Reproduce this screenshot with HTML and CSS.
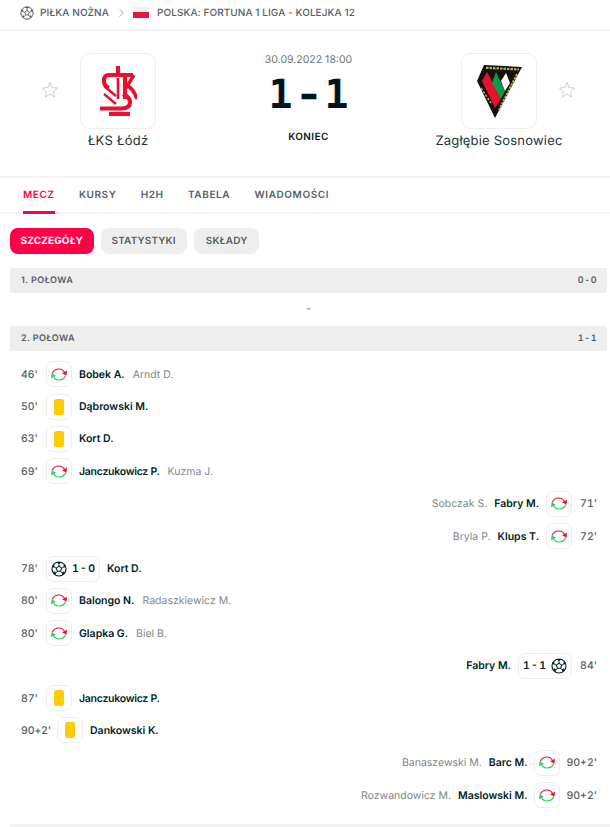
FILE: index.html
```html
<!DOCTYPE html>
<html lang="pl">
<head>
<meta charset="utf-8">
<title>ŁKS Łódź - Zagłębie Sosnowiec</title>
<link rel="stylesheet" href="styles.css">
</head>
<body>
<svg class="defs" width="0" height="0" aria-hidden="true">
  <defs>
    <symbol id="ball" viewBox="0 0 20 20">
      <circle cx="10" cy="10" r="8.800" fill="none" stroke="currentColor" stroke-width="1.400"/>
      <path d="M10 6.500l3.300 2.400-1.300 3.900H8L6.700 8.900z" fill="none" stroke="currentColor" stroke-width="1.300" stroke-linejoin="round"/>
      <path d="M10 6.500V4M13.300 8.900l2.400-.8M12 12.800l1.500 2M8 12.800l-1.500 2M6.700 8.900l-2.400-.8" stroke="currentColor" stroke-width="1.200" fill="none"/>
      <path d="M7 2l3 2 3-2-3-.8zM15.700 8.100l2.900-.4-1-3-2.300 1.200zM13.500 14.800l1 2.800 2.200-2.600-1.100-2.200zM6.500 14.800l-1 2.800-2.200-2.600 1.100-2.200zM4.300 8.100l-2.900-.4 1-3 2.300 1.200z" fill="currentColor"/>
    </symbol>
    <symbol id="sub" viewBox="0 0 16 13">
      <path d="M1.300 5.500C2.500 2.200 5.300 1 8 1c2.500 0 4.500 1.300 5.500 3.500" fill="none" stroke="#e8102f" stroke-width="1.200"/>
      <path d="M16 2.800l-.6 4.900-4.300-2.500z" fill="#e8102f"/>
      <path d="M14.700 7.500C13.500 10.800 10.700 12 8 12c-2.500 0-4.500-1.300-5.500-3.500" fill="none" stroke="#2fd060" stroke-width="1.200"/>
      <path d="M0 10.200l.6-4.900 4.300 2.500z" fill="#2fd060"/>
    </symbol>
    <symbol id="star" viewBox="0 0 20 20">
      <path d="M10 1.800l2.400 5.500 6 .6-4.500 4 1.300 5.900-5.200-3.100-5.200 3.100 1.300-5.900-4.500-4 6-.6z" fill="none" stroke="currentColor" stroke-width="1.100" stroke-linejoin="round"/>
    </symbol>
  </defs>
</svg>

<nav class="crumbs">
  <svg class="crumb-ball"><use href="#ball"/></svg>
  <span class="crumb">PIŁKA NOŻNA</span>
  <svg class="crumb-sep" viewBox="0 0 5 8"><path d="M.5.5l4 3.500-4 3.500" fill="none" stroke="currentColor" stroke-width="1"/></svg>
  <span class="flag"></span>
  <span class="crumb">POLSKA: FORTUNA 1 LIGA - KOLEJKA 12</span>
</nav>

<header class="match">
  <div class="team">
    <svg class="star"><use href="#star"/></svg>
    <div class="team-col">
      <div class="logo">
        <svg class="crest" viewBox="0 0 37 50">
          <g fill="none" stroke="#e8102f" stroke-width="4.200">
            <path d="M18 0v9"/>
            <path d="M33 9H9Q4 9 4 15q0 5 5 7"/>
            <path d="M18 12v21" stroke-width="2.600"/>
            <path d="M25 11v22"/>
            <path d="M26 22l8-13" stroke-width="3.400"/>
            <path d="M26 19c5 2 9 8 11 14" stroke-width="3.800"/>
            <path d="M4 20l12 10M4 28l12 10" stroke-width="2.400"/>
            <path d="M0 42.500h22q8 0 8-6.500 0-5-7-8"/>
            <path d="M9 48h21"/>
          </g>
        </svg>
      </div>
      <div class="team-name">ŁKS Łódź</div>
    </div>
  </div>
  <div class="center">
    <div class="date">30.09.2022 18:00</div>
    <div class="score"><span>1</span><span class="dash">-</span><span>1</span></div>
    <div class="status">KONIEC</div>
  </div>
  <div class="team team-away">
    <div class="team-col">
      <div class="logo">
        <svg class="crest-away" viewBox="0 0 46 54">
          <path d="M8 1l38 2-27 51L1 17z" fill="#15120c"/>
          <path d="M11 8l14 27-6 9L6 17z" fill="#e8102f"/>
          <path d="M20 8l9 19-4 8-9-16z" fill="#0f9b4b"/>
          <path d="M30 9l4 10-5 8-4-10z" fill="#fff"/>
          <path d="M10 3.800l33 1.700" stroke="#c3a95e" stroke-width="2.200" stroke-dasharray="2.500 1"/>
          <path d="M41 10L23 46" stroke="#c3a95e" stroke-width="2" stroke-dasharray="2.500 1"/>
          <path d="M5 24l10 15" stroke="#c3a95e" stroke-width="1.600" stroke-dasharray="2.500 1.500"/>
        </svg>
      </div>
      <div class="team-name">Zagłębie Sosnowiec</div>
    </div>
    <svg class="star"><use href="#star"/></svg>
  </div>
</header>

<nav class="tabs">
  <a class="tab tab-active">MECZ</a>
  <a class="tab">KURSY</a>
  <a class="tab">H2H</a>
  <a class="tab">TABELA</a>
  <a class="tab">WIADOMOŚCI</a>
</nav>

<div class="pills">
  <a class="pill pill-active">SZCZEGÓŁY</a>
  <a class="pill">STATYSTYKI</a>
  <a class="pill">SKŁADY</a>
</div>

<section class="period"><span>1. POŁOWA</span><span class="period-score">0 - 0</span></section>
<div class="empty">-</div>
<section class="period"><span>2. POŁOWA</span><span class="period-score">1 - 1</span></section>

<div class="events">
  <div class="ev"><span class="min">46'</span><span class="box"><svg class="sub"><use href="#sub"/></svg></span><b>Bobek A.</b><i>Arndt D.</i></div>
  <div class="ev"><span class="min">50'</span><span class="box"><span class="card"></span></span><b>Dąbrowski M.</b></div>
  <div class="ev"><span class="min">63'</span><span class="box"><span class="card"></span></span><b>Kort D.</b></div>
  <div class="ev"><span class="min">69'</span><span class="box"><svg class="sub"><use href="#sub"/></svg></span><b class="tight">Janczukowicz P.</b><i>Kuzma J.</i></div>
  <div class="ev ev-away"><span class="min">71'</span><span class="box"><svg class="sub"><use href="#sub"/></svg></span><b>Fabry M.</b><i>Sobczak S.</i></div>
  <div class="ev ev-away"><span class="min">72'</span><span class="box"><svg class="sub"><use href="#sub"/></svg></span><b>Klups T.</b><i>Bryla P.</i></div>
  <div class="ev"><span class="min">78'</span><span class="box box-goal"><svg class="goal"><use href="#ball"/></svg><em>1 - 0</em></span><b>Kort D.</b></div>
  <div class="ev"><span class="min">80'</span><span class="box"><svg class="sub"><use href="#sub"/></svg></span><b>Balongo N.</b><i>Radaszkiewicz M.</i></div>
  <div class="ev"><span class="min">80'</span><span class="box"><svg class="sub"><use href="#sub"/></svg></span><b>Glapka G.</b><i>Biel B.</i></div>
  <div class="ev ev-away"><span class="min">84'</span><span class="box box-goal"><svg class="goal"><use href="#ball"/></svg><em>1 - 1</em></span><b>Fabry M.</b></div>
  <div class="ev"><span class="min">87'</span><span class="box"><span class="card"></span></span><b class="tight">Janczukowicz P.</b></div>
  <div class="ev"><span class="min">90+2'</span><span class="box"><span class="card"></span></span><b>Dankowski K.</b></div>
  <div class="ev ev-away"><span class="min">90+2'</span><span class="box"><svg class="sub"><use href="#sub"/></svg></span><b>Barc M.</b><i>Banaszewski M.</i></div>
  <div class="ev ev-away"><span class="min">90+2'</span><span class="box"><svg class="sub"><use href="#sub"/></svg></span><b>Maslowski M.</b><i>Rozwandowicz M.</i></div>
</div>
<div class="end"></div>
</body>
</html>
```
FILE: styles.css
```css
* { box-sizing: border-box; }
html, body { margin: 0; padding: 0; }
body {
  width: 610px;
  height: 827px;
  overflow: hidden;
  background: #fff;
  color: #001e28;
  font-family: Inter, "Liberation Sans", sans-serif;
  text-rendering: geometricPrecision;
}
.defs { position: absolute; }

.crumbs {
  display: flex;
  align-items: center;
  height: 31px;
  padding: 0 0 4px 20px;
  border-bottom: 2px solid #f2f2f2;
}
.crumb-ball { width: 14px; height: 14px; color: #555e63; margin-right: 6px; }
.crumb {
  font-size: 10px;
  font-weight: 500;
  letter-spacing: .08px;
  color: #555e63;
  white-space: nowrap;
}
.crumb-sep { width: 5px; height: 8px; color: #a3a8ab; margin: 0 9px 0 10px; }
.flag {
  width: 16px;
  height: 11px;
  margin-right: 8px;
  background: linear-gradient(#f0f0f0 50%, #e2173d 50%);
}

.match {
  display: grid;
  grid-template-columns: 1fr auto 1fr;
  width: 617px;
  height: 147px;
  border-bottom: 2px solid #f2f2f2;
}
.team { display: flex; align-items: flex-start; padding-top: 22px; padding-left: 41px; }
.team-away { justify-content: flex-end; padding-left: 0; padding-right: 41px; }
.star { width: 18px; height: 18px; color: #c9cccd; margin-top: 28px; flex: none; }
.team-col { width: 110px; display: flex; flex-direction: column; align-items: center; margin-left: 4px; }
.team-away .team-col { margin-left: 0; margin-right: 4px; }
.logo {
  width: 76px;
  height: 76px;
  border: 1px solid #eee;
  border-radius: 10px;
  display: flex;
  align-items: center;
  justify-content: center;
}
.crest { width: 37px; height: 50px; }
.crest-away { width: 46px; height: 54px; }
.team-name { margin-top: 2px; font-size: 13px; line-height: 20px; letter-spacing: .2px; color: #21333b; white-space: nowrap; }

.center { width: 112px; display: flex; flex-direction: column; align-items: center; padding-top: 21px; }
.date { font-size: 10.5px; line-height: 16px; color: #6b7377; white-space: nowrap; }
.score {
  display: flex;
  justify-content: center;
  margin-top: 5px;
  font-family: "DejaVu Sans Mono", monospace;
  font-size: 40px;
  line-height: 44px;
  font-weight: 700;
  color: #00141e;
}
.score span { width: 28px; text-align: center; }
.score .dash { transform: scaleX(1.2); }
.status { margin-top: 12px; font-size: 10px; line-height: 16px; font-weight: 600; letter-spacing: .4px; color: #001e28; }

.tabs {
  display: flex;
  gap: 24.300px;
  height: 36px;
  padding: 0 0 0 23px;
  border-bottom: 2px solid #f2f2f2;
}
.tab {
  height: 36px;
  line-height: 35px;
  font-size: 10px;
  font-weight: 600;
  letter-spacing: .6px;
  color: #555e63;
  border-bottom: 3px solid transparent;
}
.tab-active { color: #ff0046; border-bottom-color: #ff0046; }

.pills { display: flex; gap: 7px; padding: 14px 10px; }
.pill {
  height: 26px;
  padding: 0 11px;
  line-height: 26px;
  border-radius: 8px;
  background: #eee;
  font-size: 10px;
  font-weight: 600;
  letter-spacing: .15px;
  color: #555e63;
}
.pill:last-child { padding: 0 12px; }
.pill-active { padding: 0 10.500px; background: #ff0046; color: #fff; font-weight: 700; }

.period {
  display: flex;
  justify-content: space-between;
  align-items: center;
  height: 25px;
  margin: 0 3px 0 10px;
  padding: 0 10px 1px 11px;
  background: #eee;
  border-radius: 2px;
  font-size: 9px;
  font-weight: 600;
  letter-spacing: .4px;
  color: #555e63;
}
.period-score { word-spacing: -2.500px; font-variant-numeric: tabular-nums; }
.empty { width: 617px; height: 33px; line-height: 33px; text-align: center; font-size: 10px; color: #555e63; }

.events { padding-top: 7px; }
.ev {
  display: flex;
  align-items: center;
  height: 32.4px;
  padding: 0 13px 0 21px;
  font-size: 10.5px;
  white-space: nowrap;
}
.ev-away { flex-direction: row-reverse; }
.min { min-width: 19px; margin-right: 6px; letter-spacing: -.1px; color: #555e63; font-weight: 500; font-variant-numeric: tabular-nums; }
.ev-away .min { margin: 0 0 0 6px; letter-spacing: 0; text-align: right; }
.box {
  display: flex;
  align-items: center;
  justify-content: center;
  gap: 5px;
  height: 26px;
  min-width: 26px;
  padding: 0 4px;
  border: 1px solid #eee;
  border-radius: 7px;
  flex: none;
}
.ev b { margin-left: 7px; font-weight: 600; color: #001e28; }
.ev b.tight { letter-spacing: -.27px; }
.ev-away b { margin: 0 7px 0 0; }
.ev i { margin-left: 8px; font-style: normal; color: #81878a; }
.ev-away i { margin: 0 7px 0 0; }
.sub { width: 16px; height: 13px; flex: none; }
.card { width: 10px; height: 16px; background: #fc0; border-radius: 2.500px; }
.goal { width: 16px; height: 16px; color: #001e28; }
.box-goal em { font-style: normal; font-weight: 600; font-size: 10.5px; word-spacing: -1.500px; font-variant-numeric: tabular-nums; color: #001e28; }
.ev-away .box-goal { flex-direction: row-reverse; }
.end { height: 3px; margin: 13px 0 0 10px; background: #f2f2f2; }
```
